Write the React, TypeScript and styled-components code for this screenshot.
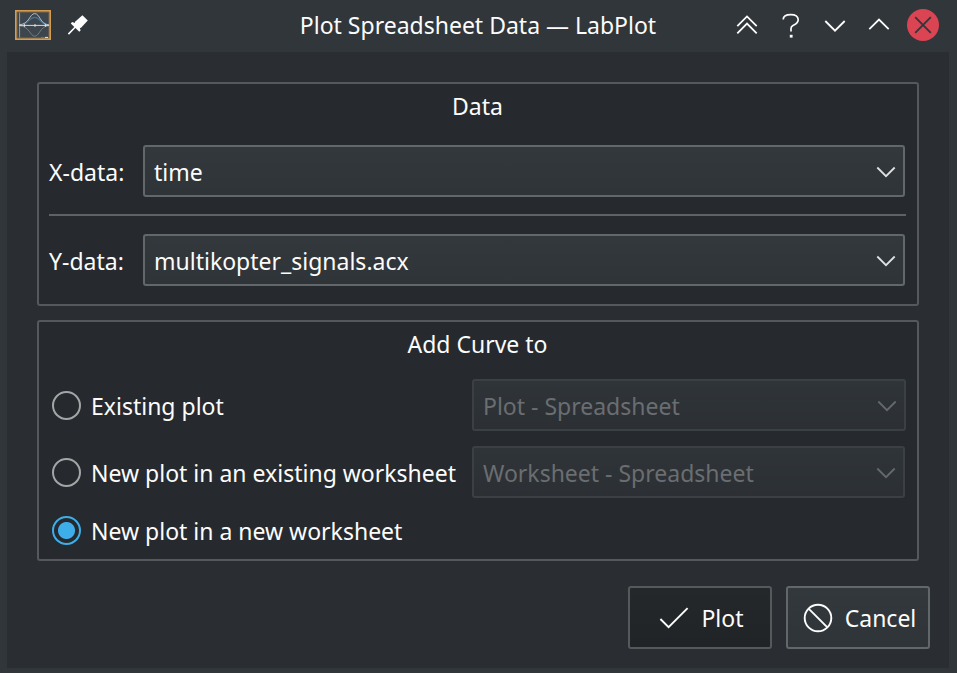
import React, { useState } from "react";
import styled, { createGlobalStyle } from "styled-components";

const GlobalStyle = createGlobalStyle`
  *, *::before, *::after { box-sizing: border-box; }
  body {
    margin: 0;
    background: #31363a;
    color: #fcfcfc;
    font-family: "Noto Sans", "Open Sans", sans-serif;
    font-size: 23px;
    line-height: 32px;
  }
  button, select, input { font: inherit; color: inherit; margin: 0; }
`;

const Window = styled.div`
  display: flex;
  flex-direction: column;
  min-height: 100vh;
  padding: 0 8px 5px 7px;
  background: #31363a;
`;

const TitleBar = styled.header`
  display: grid;
  grid-template-columns: 1fr auto 1fr;
  align-items: center;
  height: 52px;
  padding: 0 4px 2px;
`;

const TitleLeft = styled.div`
  display: flex;
  align-items: center;
  gap: 16px;
  padding-left: 4px;
`;

const TitleText = styled.h1`
  margin: 0;
  font-size: 23px;
  font-weight: 400;
  white-space: nowrap;
`;

const TitleRight = styled.div`
  display: flex;
  justify-content: flex-end;
`;

const BarButton = styled.button<{ $narrow?: boolean }>`
  display: flex;
  align-items: center;
  justify-content: center;
  width: ${(p) => (p.$narrow ? "22px" : "44px")};
  height: 36px;
  padding: 0;
  border: 0;
  background: none;
`;

const Icon = styled.svg`
  display: block;
  flex: none;
  fill: none;
  stroke: currentColor;
`;

const Body = styled.main`
  display: flex;
  flex: 1;
  flex-direction: column;
  padding: 30px 19px 19px 30px;
  background: #2a2e32;
`;

const Group = styled.section<{ $bottom: number }>`
  margin: 0 11px 14px 0;
  padding: 6px 11px ${(p) => p.$bottom}px 10px;
  border: 2px solid #55595c;
  border-radius: 3px;
  background: #262a2e;
`;

const GroupTitle = styled.h2<{ $gap: number }>`
  margin: 0 0 ${(p) => p.$gap}px;
  font-size: 23px;
  font-weight: 400;
  text-align: center;
`;

const DataRow = styled.div`
  display: grid;
  grid-template-columns: 94px 1fr;
  align-items: center;
  padding-right: 1px;
`;

const FieldLabel = styled.label`
  padding-top: 1px;
`;

const Separator = styled.hr`
  height: 2px;
  margin: 17px 0 18px;
  border: 0;
  background: #5d6264;
`;

const Combo = styled.div<{ $inset?: boolean }>`
  display: grid;
  align-items: center;
  margin-right: ${(p) => (p.$inset ? "1px" : "0")};
  & > * { grid-area: 1 / 1; }
`;

const Select = styled.select`
  appearance: none;
  width: 100%;
  height: 52px;
  padding: 1px 40px 0 9px;
  border: 2px solid #62676a;
  border-radius: 3px;
  background: linear-gradient(#33383c, #2f3438);
  &:disabled {
    border-color: #3b4044;
    background: linear-gradient(#2f3438, #2c3034);
    color: #6a6e71;
    opacity: 1;
  }
`;

const Arrow = styled(Icon)<{ $dim?: boolean }>`
  justify-self: end;
  margin: 2px 9px 0 0;
  color: ${(p) => (p.$dim ? "#66696c" : "#dfe0e1")};
  pointer-events: none;
`;

const Choices = styled.div`
  display: grid;
  grid-template-columns: 423px 1fr;
  grid-template-rows: 54px 52px 36px;
  row-gap: 14px;
  align-items: center;
`;

const Choice = styled.label`
  display: flex;
  align-items: center;
  gap: 10px;
  padding-left: 3px;
  white-space: nowrap;
`;

const ChoiceText = styled.span`
  padding-top: 1px;
`;

const Radio = styled.input`
  appearance: none;
  flex: none;
  width: 29px;
  height: 29px;
  border: 2px solid #a3a5a7;
  border-radius: 50%;
  &:checked {
    border-color: #3daee9;
    background: radial-gradient(circle, #3daee9 8px, transparent 9px);
  }
`;

const Actions = styled.footer`
  display: flex;
  justify-content: flex-end;
  gap: 14px;
  margin-top: 11px;
`;

const ActionButton = styled.button<{ $primary?: boolean }>`
  display: flex;
  align-items: center;
  justify-content: center;
  gap: 12px;
  width: 144px;
  height: 63px;
  padding: 0 0 0 3px;
  border: 2px solid ${(p) => (p.$primary ? "#55595b" : "#62676a")};
  border-radius: 3px;
  background: ${(p) =>
    p.$primary ? "linear-gradient(#24282a, #202426)" : "linear-gradient(#33383c, #2f3438)"};
`;

type ComboProps = {
  id?: string;
  label?: string;
  value: string;
  disabled?: boolean;
  inset?: boolean;
};

function ComboBox({ id, label, value, disabled, inset }: ComboProps) {
  return (
    <Combo $inset={inset}>
      <Select id={id} aria-label={label} disabled={disabled} defaultValue={value}>
        <option>{value}</option>
      </Select>
      <Arrow $dim={disabled} width="20" height="12" viewBox="0 0 20 12" strokeWidth="1.8" aria-hidden>
        <path d="M1.3 1.5 L10 10.2 L18.7 1.5" />
      </Arrow>
    </Combo>
  );
}

function AppIcon() {
  return (
    <Icon width="36" height="30" viewBox="0 0 36 30" aria-hidden>
      <rect x="0.9" y="0.9" width="34.2" height="28.2" fill="#3e464d" stroke="#d39c50" strokeWidth="1.8" />
      <rect x="2.2" y="2.2" width="31.6" height="25.6" stroke="#735f48" strokeWidth="0.8" />
      <path d="M4.6 2.5 V27.5" stroke="#949a9e" strokeWidth="1" />
      <path d="M4 15.2 C14.5 15 13.5 7.4 19.7 7.4 C26 7.4 24.5 15 34 15.2" stroke="#3c78a5" strokeWidth="1.1" />
      <path d="M4 14.8 C14.5 14.4 14.5 3.6 19.7 3.6 C25 3.6 25 14.4 34 14.8" stroke="#b8bcbe" strokeWidth="1" />
      <path d="M4 15.8 C14.5 16 15 26.2 19.7 26.2 C24.5 26.2 25 16 34 15.8" stroke="#747a7e" strokeWidth="1" />
      <path d="M4 15.4 H34" stroke="#d3dadd" strokeWidth="1" />
      <path d="M9.5 14.2 V16.8 M30.5 14.2 V16.8 M20 14.2 V16.8" stroke="#e3e6e7" strokeWidth="1.2" />
      <path d="M26 27.4 H29.5" stroke="#3e83b2" strokeWidth="1" />
      <path d="M30 27.4 H33" stroke="#ececec" strokeWidth="1" />
    </Icon>
  );
}

export default function App() {
  const [target, setTarget] = useState("new");
  const radio = (value: string) => ({
    type: "radio",
    name: "target",
    checked: target === value,
    onChange: () => setTarget(value),
  });

  return (
    <>
      <GlobalStyle />
      <Window>
        <TitleBar>
          <TitleLeft>
            <AppIcon />
            <BarButton $narrow aria-label="Keep on all desktops">
              <Icon width="22" height="22" viewBox="0 0 22 22" aria-hidden>
                <path
                  d="M15.4 1.2 L20.8 6.6 L13.8 14 L12.8 13.8 L13.6 16.5 L12.3 17.8 L8.4 14.1 L2 20.7 L0.8 19.5 L7.3 13 L3.8 9.4 L5.1 8.1 L7.9 8.9 L7.8 7.9 Z"
                  fill="currentColor"
                  stroke="none"
                />
              </Icon>
            </BarButton>
          </TitleLeft>
          <TitleText>Plot Spreadsheet Data — LabPlot</TitleText>
          <TitleRight>
            <BarButton aria-label="Shade">
              <Icon width="22" height="22" viewBox="0 0 22 22" strokeWidth="1.8" aria-hidden>
                <path d="M1.3 12.1 L11 2.4 L20.7 12.1 M1.3 19.3 L11 9.6 L20.7 19.3" />
              </Icon>
            </BarButton>
            <BarButton aria-label="Help">
              <Icon width="20" height="26" viewBox="0 0 20 26" strokeWidth="1.7" aria-hidden>
                <path d="M2.2 7.6 C2.2 4.4 5.2 2.7 9.8 2.7 C14.6 2.7 17.2 4.5 17.2 7.8 C17.2 11.4 14.2 12.5 12 13.5 C10.4 14.3 10 15.2 10 16.6 V19.4" />
                <rect x="8.8" y="22.8" width="2.8" height="2.8" fill="currentColor" stroke="none" />
              </Icon>
            </BarButton>
            <BarButton aria-label="Minimize">
              <Icon width="22" height="22" viewBox="0 0 22 22" strokeWidth="1.8" aria-hidden>
                <path d="M1.3 7 L11 16.7 L20.7 7" />
              </Icon>
            </BarButton>
            <BarButton aria-label="Maximize">
              <Icon width="22" height="22" viewBox="0 0 22 22" strokeWidth="1.8" aria-hidden>
                <path d="M1.3 15.2 L11 5.5 L20.7 15.2" />
              </Icon>
            </BarButton>
            <BarButton aria-label="Close">
              <Icon width="32" height="32" viewBox="0 0 32 32" aria-hidden>
                <circle cx="16" cy="16" r="16" fill="#da4453" stroke="none" />
                <path d="M8.2 8.2 L23.8 23.8 M23.8 8.2 L8.2 23.8" stroke="#31363b" strokeWidth="1.8" />
              </Icon>
            </BarButton>
          </TitleRight>
        </TitleBar>

        <Body>
          <Group $bottom={18}>
            <GroupTitle $gap={23}>Data</GroupTitle>
            <DataRow>
              <FieldLabel htmlFor="x-data">X-data:</FieldLabel>
              <ComboBox id="x-data" value="time" />
            </DataRow>
            <Separator />
            <DataRow>
              <FieldLabel htmlFor="y-data">Y-data:</FieldLabel>
              <ComboBox id="y-data" value="multikopter_signals.acx" />
            </DataRow>
          </Group>

          <Group $bottom={11}>
            <GroupTitle $gap={18}>Add Curve to</GroupTitle>
            <Choices>
              <Choice>
                <Radio {...radio("plot")} />
                <ChoiceText>Existing plot</ChoiceText>
              </Choice>
              <ComboBox label="Existing plot" value="Plot - Spreadsheet" disabled={target !== "plot"} />
              <Choice>
                <Radio {...radio("worksheet")} />
                <ChoiceText>New plot in an existing worksheet</ChoiceText>
              </Choice>
              <ComboBox
                label="Existing worksheet"
                value="Worksheet - Spreadsheet"
                disabled={target !== "worksheet"}
                inset
              />
              <Choice>
                <Radio {...radio("new")} />
                <ChoiceText>New plot in a new worksheet</ChoiceText>
              </Choice>
            </Choices>
          </Group>

          <Actions>
            <ActionButton $primary>
              <Icon width="30" height="22" viewBox="0 0 30 22" strokeWidth="1.9" aria-hidden>
                <path d="M1.4 12 L9.6 20.2 L28.6 1.2" />
              </Icon>
              Plot
            </ActionButton>
            <ActionButton>
              <Icon width="30" height="30" viewBox="0 0 30 30" strokeWidth="1.9" aria-hidden>
                <circle cx="15" cy="15" r="13.3" />
                <path d="M5.6 5.6 L24.4 24.4" />
              </Icon>
              Cancel
            </ActionButton>
          </Actions>
        </Body>
      </Window>
    </>
  );
}
